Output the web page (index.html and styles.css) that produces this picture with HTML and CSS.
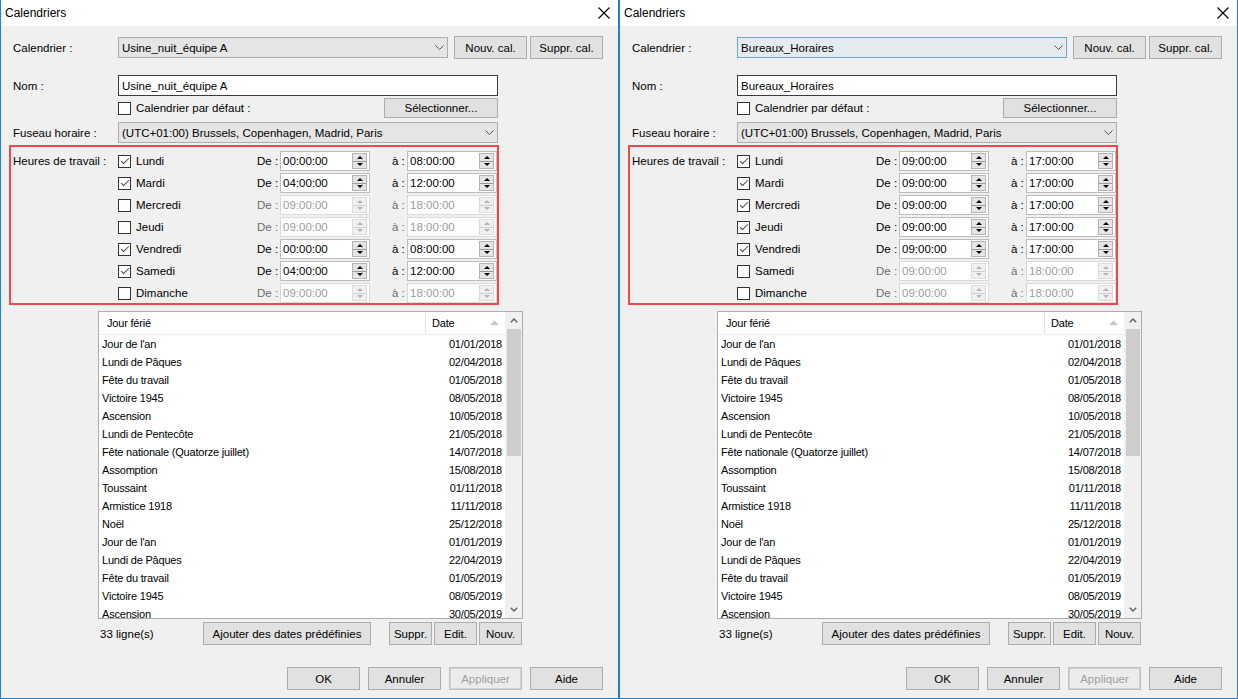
FILE: index.html
```html
<!DOCTYPE html>
<html lang="fr">
<head>
<meta charset="utf-8">
<title>Calendriers</title>
<link rel="stylesheet" href="styles.css">
</head>
<body>
<div class="screen">

<!-- ===== LEFT DIALOG ===== -->
<div class="dialog">
  <div class="titlebar">
    <span>Calendriers</span>
    <svg class="close" width="12" height="12" viewBox="0 0 12 12"><path d="M0.5 0.5 L11.5 11.5 M11.5 0.5 L0.5 11.5" stroke="#000" stroke-width="1.1" fill="none"/></svg>
  </div>
  <div class="content">
    <div class="r1">
      <span class="lbl">Calendrier :</span>
      <div class="combo w330"><span>Usine_nuit_équipe A</span><svg width="9" height="5" viewBox="0 0 9 5"><path d="M0.5 0.5 L4.5 4.5 L8.5 0.5" stroke="#555" fill="none"/></svg></div>
      <div class="btn ml6">Nouv. cal.</div>
      <div class="btn ml3">Suppr. cal.</div>
    </div>
    <div class="r2">
      <span class="lbl">Nom :</span>
      <div class="input">Usine_nuit_équipe A</div>
    </div>
    <div class="r3">
      <span class="lbl"></span>
      <div class="chk"><span class="cb"></span>Calendrier par défaut :</div>
      <div class="btn sel">Sélectionner...</div>
    </div>
    <div class="r4">
      <span class="lbl">Fuseau horaire :</span>
      <div class="combo w380"><span>(UTC+01:00) Brussels, Copenhagen, Madrid, Paris</span><svg width="9" height="5" viewBox="0 0 9 5"><path d="M0.5 0.5 L4.5 4.5 L8.5 0.5" stroke="#555" fill="none"/></svg></div>
    </div>
    <div class="hours">
      <span class="hours-lbl">Heures de travail :</span>
      <div class="days">
        <div class="day"><div class="chk dchk"><span class="cb on"></span>Lundi</div><span class="de">De :</span><div class="field"><span>00:00:00</span><span class="spin"><i class="up"></i><i class="dn"></i></span></div><span class="a">à :</span><div class="field"><span>08:00:00</span><span class="spin"><i class="up"></i><i class="dn"></i></span></div></div>
        <div class="day"><div class="chk dchk"><span class="cb on"></span>Mardi</div><span class="de">De :</span><div class="field"><span>04:00:00</span><span class="spin"><i class="up"></i><i class="dn"></i></span></div><span class="a">à :</span><div class="field"><span>12:00:00</span><span class="spin"><i class="up"></i><i class="dn"></i></span></div></div>
        <div class="day off"><div class="chk dchk"><span class="cb"></span>Mercredi</div><span class="de">De :</span><div class="field"><span>09:00:00</span><span class="spin"><i class="up"></i><i class="dn"></i></span></div><span class="a">à :</span><div class="field"><span>18:00:00</span><span class="spin"><i class="up"></i><i class="dn"></i></span></div></div>
        <div class="day off"><div class="chk dchk"><span class="cb"></span>Jeudi</div><span class="de">De :</span><div class="field"><span>09:00:00</span><span class="spin"><i class="up"></i><i class="dn"></i></span></div><span class="a">à :</span><div class="field"><span>18:00:00</span><span class="spin"><i class="up"></i><i class="dn"></i></span></div></div>
        <div class="day"><div class="chk dchk"><span class="cb on"></span>Vendredi</div><span class="de">De :</span><div class="field"><span>00:00:00</span><span class="spin"><i class="up"></i><i class="dn"></i></span></div><span class="a">à :</span><div class="field"><span>08:00:00</span><span class="spin"><i class="up"></i><i class="dn"></i></span></div></div>
        <div class="day"><div class="chk dchk"><span class="cb on"></span>Samedi</div><span class="de">De :</span><div class="field"><span>04:00:00</span><span class="spin"><i class="up"></i><i class="dn"></i></span></div><span class="a">à :</span><div class="field"><span>12:00:00</span><span class="spin"><i class="up"></i><i class="dn"></i></span></div></div>
        <div class="day off"><div class="chk dchk"><span class="cb"></span>Dimanche</div><span class="de">De :</span><div class="field"><span>09:00:00</span><span class="spin"><i class="up"></i><i class="dn"></i></span></div><span class="a">à :</span><div class="field"><span>18:00:00</span><span class="spin"><i class="up"></i><i class="dn"></i></span></div></div>
      </div>
    </div>
    <div class="tbl">
      <div class="list">
        <div class="hdr"><span class="h1">Jour férié</span><span class="h2">Date<svg class="sort" width="9" height="5" viewBox="0 0 9 5"><path d="M0 5 L4.5 0.5 L9 5 Z" fill="#c8c8c8"/></svg></span></div>
        <div class="row"><span class="c1">Jour de l'an</span><span class="c2">01/01/2018</span></div>
        <div class="row"><span class="c1">Lundi de Pâques</span><span class="c2">02/04/2018</span></div>
        <div class="row"><span class="c1">Fête du travail</span><span class="c2">01/05/2018</span></div>
        <div class="row"><span class="c1">Victoire 1945</span><span class="c2">08/05/2018</span></div>
        <div class="row"><span class="c1">Ascension</span><span class="c2">10/05/2018</span></div>
        <div class="row"><span class="c1">Lundi de Pentecôte</span><span class="c2">21/05/2018</span></div>
        <div class="row"><span class="c1">Fête nationale (Quatorze juillet)</span><span class="c2">14/07/2018</span></div>
        <div class="row"><span class="c1">Assomption</span><span class="c2">15/08/2018</span></div>
        <div class="row"><span class="c1">Toussaint</span><span class="c2">01/11/2018</span></div>
        <div class="row"><span class="c1">Armistice 1918</span><span class="c2">11/11/2018</span></div>
        <div class="row"><span class="c1">Noël</span><span class="c2">25/12/2018</span></div>
        <div class="row"><span class="c1">Jour de l'an</span><span class="c2">01/01/2019</span></div>
        <div class="row"><span class="c1">Lundi de Pâques</span><span class="c2">22/04/2019</span></div>
        <div class="row"><span class="c1">Fête du travail</span><span class="c2">01/05/2019</span></div>
        <div class="row"><span class="c1">Victoire 1945</span><span class="c2">08/05/2019</span></div>
        <div class="row"><span class="c1">Ascension</span><span class="c2">30/05/2019</span></div>
      </div>
      <div class="sb">
        <div class="sb-btn"><svg width="8" height="5" viewBox="0 0 8 5"><path d="M0.8 4.3 L4 1 L7.2 4.3" stroke="#606060" stroke-width="1.4" fill="none"/></svg></div>
        <div class="thumb"></div>
        <div class="sb-btn down"><svg width="8" height="5" viewBox="0 0 8 5"><path d="M0.8 0.7 L4 4 L7.2 0.7" stroke="#606060" stroke-width="1.4" fill="none"/></svg></div>
      </div>
    </div>
    <div class="foot">
      <span class="count">33 ligne(s)</span>
      <div class="btn add">Ajouter des dates prédéfinies</div>
      <div class="btn sm first">Suppr.</div>
      <div class="btn sm">Edit.</div>
      <div class="btn sm">Nouv.</div>
    </div>
    <div class="actions">
      <div class="btn">OK</div>
      <div class="btn">Annuler</div>
      <div class="btn disabled">Appliquer</div>
      <div class="btn">Aide</div>
    </div>
  </div>
</div>

<!-- ===== RIGHT DIALOG ===== -->
<div class="dialog">
  <div class="titlebar">
    <span>Calendriers</span>
    <svg class="close" width="12" height="12" viewBox="0 0 12 12"><path d="M0.5 0.5 L11.5 11.5 M11.5 0.5 L0.5 11.5" stroke="#000" stroke-width="1.1" fill="none"/></svg>
  </div>
  <div class="content">
    <div class="r1">
      <span class="lbl">Calendrier :</span>
      <div class="combo w330 focus"><span>Bureaux_Horaires</span><svg width="9" height="5" viewBox="0 0 9 5"><path d="M0.5 0.5 L4.5 4.5 L8.5 0.5" stroke="#555" fill="none"/></svg></div>
      <div class="btn ml6">Nouv. cal.</div>
      <div class="btn ml3">Suppr. cal.</div>
    </div>
    <div class="r2">
      <span class="lbl">Nom :</span>
      <div class="input">Bureaux_Horaires</div>
    </div>
    <div class="r3">
      <span class="lbl"></span>
      <div class="chk"><span class="cb"></span>Calendrier par défaut :</div>
      <div class="btn sel">Sélectionner...</div>
    </div>
    <div class="r4">
      <span class="lbl">Fuseau horaire :</span>
      <div class="combo w380"><span>(UTC+01:00) Brussels, Copenhagen, Madrid, Paris</span><svg width="9" height="5" viewBox="0 0 9 5"><path d="M0.5 0.5 L4.5 4.5 L8.5 0.5" stroke="#555" fill="none"/></svg></div>
    </div>
    <div class="hours">
      <span class="hours-lbl">Heures de travail :</span>
      <div class="days">
        <div class="day"><div class="chk dchk"><span class="cb on"></span>Lundi</div><span class="de">De :</span><div class="field"><span>09:00:00</span><span class="spin"><i class="up"></i><i class="dn"></i></span></div><span class="a">à :</span><div class="field"><span>17:00:00</span><span class="spin"><i class="up"></i><i class="dn"></i></span></div></div>
        <div class="day"><div class="chk dchk"><span class="cb on"></span>Mardi</div><span class="de">De :</span><div class="field"><span>09:00:00</span><span class="spin"><i class="up"></i><i class="dn"></i></span></div><span class="a">à :</span><div class="field"><span>17:00:00</span><span class="spin"><i class="up"></i><i class="dn"></i></span></div></div>
        <div class="day"><div class="chk dchk"><span class="cb on"></span>Mercredi</div><span class="de">De :</span><div class="field"><span>09:00:00</span><span class="spin"><i class="up"></i><i class="dn"></i></span></div><span class="a">à :</span><div class="field"><span>17:00:00</span><span class="spin"><i class="up"></i><i class="dn"></i></span></div></div>
        <div class="day"><div class="chk dchk"><span class="cb on"></span>Jeudi</div><span class="de">De :</span><div class="field"><span>09:00:00</span><span class="spin"><i class="up"></i><i class="dn"></i></span></div><span class="a">à :</span><div class="field"><span>17:00:00</span><span class="spin"><i class="up"></i><i class="dn"></i></span></div></div>
        <div class="day"><div class="chk dchk"><span class="cb on"></span>Vendredi</div><span class="de">De :</span><div class="field"><span>09:00:00</span><span class="spin"><i class="up"></i><i class="dn"></i></span></div><span class="a">à :</span><div class="field"><span>17:00:00</span><span class="spin"><i class="up"></i><i class="dn"></i></span></div></div>
        <div class="day off"><div class="chk dchk"><span class="cb"></span>Samedi</div><span class="de">De :</span><div class="field"><span>09:00:00</span><span class="spin"><i class="up"></i><i class="dn"></i></span></div><span class="a">à :</span><div class="field"><span>18:00:00</span><span class="spin"><i class="up"></i><i class="dn"></i></span></div></div>
        <div class="day off"><div class="chk dchk"><span class="cb"></span>Dimanche</div><span class="de">De :</span><div class="field"><span>09:00:00</span><span class="spin"><i class="up"></i><i class="dn"></i></span></div><span class="a">à :</span><div class="field"><span>18:00:00</span><span class="spin"><i class="up"></i><i class="dn"></i></span></div></div>
      </div>
    </div>
    <div class="tbl">
      <div class="list">
        <div class="hdr"><span class="h1">Jour férié</span><span class="h2">Date<svg class="sort" width="9" height="5" viewBox="0 0 9 5"><path d="M0 5 L4.5 0.5 L9 5 Z" fill="#c8c8c8"/></svg></span></div>
        <div class="row"><span class="c1">Jour de l'an</span><span class="c2">01/01/2018</span></div>
        <div class="row"><span class="c1">Lundi de Pâques</span><span class="c2">02/04/2018</span></div>
        <div class="row"><span class="c1">Fête du travail</span><span class="c2">01/05/2018</span></div>
        <div class="row"><span class="c1">Victoire 1945</span><span class="c2">08/05/2018</span></div>
        <div class="row"><span class="c1">Ascension</span><span class="c2">10/05/2018</span></div>
        <div class="row"><span class="c1">Lundi de Pentecôte</span><span class="c2">21/05/2018</span></div>
        <div class="row"><span class="c1">Fête nationale (Quatorze juillet)</span><span class="c2">14/07/2018</span></div>
        <div class="row"><span class="c1">Assomption</span><span class="c2">15/08/2018</span></div>
        <div class="row"><span class="c1">Toussaint</span><span class="c2">01/11/2018</span></div>
        <div class="row"><span class="c1">Armistice 1918</span><span class="c2">11/11/2018</span></div>
        <div class="row"><span class="c1">Noël</span><span class="c2">25/12/2018</span></div>
        <div class="row"><span class="c1">Jour de l'an</span><span class="c2">01/01/2019</span></div>
        <div class="row"><span class="c1">Lundi de Pâques</span><span class="c2">22/04/2019</span></div>
        <div class="row"><span class="c1">Fête du travail</span><span class="c2">01/05/2019</span></div>
        <div class="row"><span class="c1">Victoire 1945</span><span class="c2">08/05/2019</span></div>
        <div class="row"><span class="c1">Ascension</span><span class="c2">30/05/2019</span></div>
      </div>
      <div class="sb">
        <div class="sb-btn"><svg width="8" height="5" viewBox="0 0 8 5"><path d="M0.8 4.3 L4 1 L7.2 4.3" stroke="#606060" stroke-width="1.4" fill="none"/></svg></div>
        <div class="thumb"></div>
        <div class="sb-btn down"><svg width="8" height="5" viewBox="0 0 8 5"><path d="M0.8 0.7 L4 4 L7.2 0.7" stroke="#606060" stroke-width="1.4" fill="none"/></svg></div>
      </div>
    </div>
    <div class="foot">
      <span class="count">33 ligne(s)</span>
      <div class="btn add">Ajouter des dates prédéfinies</div>
      <div class="btn sm first">Suppr.</div>
      <div class="btn sm">Edit.</div>
      <div class="btn sm">Nouv.</div>
    </div>
    <div class="actions">
      <div class="btn">OK</div>
      <div class="btn">Annuler</div>
      <div class="btn disabled">Appliquer</div>
      <div class="btn">Aide</div>
    </div>
  </div>
</div>

</div>
</body>
</html>
```

FILE: styles.css
```css
html, body {
  margin: 0;
  padding: 0;
  background: #f0f0f0;
}
body {
  font-family: "Liberation Sans", Arial, sans-serif;
  font-size: 11.5px;
  color: #000;
}
.screen {
  display: flex;
  width: 1238px;
  height: 699px;
  overflow: hidden;
}
.dialog {
  width: 619px;
  height: 699px;
  flex: none;
  box-sizing: border-box;
  border: 1px solid #1883d7;
  border-top: 0;
  background: #f0f0f0;
  display: flex;
  flex-direction: column;
}
.titlebar {
  height: 26px;
  flex: none;
  background: #fff;
  display: flex;
  align-items: center;
  justify-content: space-between;
  padding: 0 8px 0 4px;
  font-size: 12px;
}
.close { display: block; }
.content {
  display: flex;
  flex-direction: column;
  padding-left: 8px;
}
.lbl {
  width: 105px;
  flex: none;
}
.r1, .r2, .r3, .r4 {
  display: flex;
  align-items: center;
  padding-left: 4px;
}
.r1 { margin-top: 10px; height: 23px; }
.r2 { margin-top: 16px; height: 21px; }
.r3 { margin-top: 2px; height: 20px; width: 485px; }
.r4 { margin-top: 4px; height: 21px; }

.combo {
  height: 21px;
  box-sizing: border-box;
  border: 1px solid #adadad;
  background: #e5e5e5;
  display: flex;
  align-items: center;
  justify-content: space-between;
  padding: 0 3px 0 3px;
}
.combo.focus {
  border-color: #6aa7dc;
  background: #e6ebf0;
}
.w330 { width: 330px; }
.w380 { width: 380px; }
.input {
  width: 380px;
  height: 21px;
  box-sizing: border-box;
  border: 1px solid #3c3c3c;
  background: #fff;
  padding-left: 3px;
  display: flex;
  align-items: center;
}
.btn {
  width: 73px;
  height: 23px;
  flex: none;
  box-sizing: border-box;
  border: 1px solid #adadad;
  background: #e1e1e1;
  display: flex;
  align-items: center;
  justify-content: center;
  white-space: nowrap;
}
.ml6 { margin-left: 6px; }
.ml3 { margin-left: 3px; }
.sel {
  width: 114px;
  height: 20px;
  margin-left: auto;
}
.chk {
  display: flex;
  align-items: center;
  gap: 5px;
}
.cb {
  width: 13px;
  height: 13px;
  box-sizing: border-box;
  border: 1px solid #333;
  background: #fff;
  display: flex;
  align-items: center;
  justify-content: center;
  flex: none;
}
.cb.on::after {
  content: "";
  width: 3px;
  height: 7px;
  border: solid #444;
  border-width: 0 1px 1px 0;
  transform: translate(0, -1px) rotate(45deg);
}

/* working hours box */
.hours {
  margin-top: 2px;
  width: 490px;
  height: 160px;
  box-sizing: border-box;
  border: 2px solid #f24848;
  padding: 3px 0 0 2px;
  display: flex;
  overflow: visible;
}
.hours-lbl {
  width: 105px;
  flex: none;
  line-height: 22px;
}
.days {
  display: flex;
  flex-direction: column;
}
.day {
  height: 22px;
  flex: none;
  display: flex;
  align-items: center;
}
.dchk { width: 139px; flex: none; }
.de { width: 23px; flex: none; }
.a { width: 15px; flex: none; margin-left: 22px; }
.field {
  width: 90px;
  height: 20px;
  flex: none;
  box-sizing: border-box;
  border: 1px solid #bdbdbd;
  background: #fff;
  display: flex;
  align-items: center;
  justify-content: space-between;
  padding: 0 2px 0 2px;
}
.spin {
  width: 15px;
  height: 16px;
  box-sizing: border-box;
  border: 1px solid #b4b4b4;
  background: #e5e5e5;
  display: flex;
  flex-direction: column;
}
.spin i {
  flex: 1;
  display: flex;
  align-items: center;
  justify-content: center;
}
.spin i.up { border-bottom: 1px solid #9a9a9a; }
.spin i.up::before {
  content: "";
  border-left: 3px solid transparent;
  border-right: 3px solid transparent;
  border-bottom: 3px solid #000;
}
.spin i.dn::before {
  content: "";
  border-left: 3px solid transparent;
  border-right: 3px solid transparent;
  border-top: 3px solid #000;
}
.day.off .de, .day.off .a { color: #6d6d6d; }
.day.off .field {
  border-color: #dadada;
  color: #9c9c9c;
}
.day.off .spin {
  border-color: #dcdcdc;
  background: #f0f0f0;
}
.day.off .spin i.up { border-bottom-color: #d0d0d0; }
.day.off .spin i.up::before { border-bottom-color: #b5b5b5; }
.day.off .spin i.dn::before { border-top-color: #b5b5b5; }

/* holiday table */
.tbl {
  margin-top: 6px;
  margin-left: 89px;
  width: 425px;
  height: 308px;
  box-sizing: border-box;
  border: 1px solid #adadad;
  background: #fff;
  display: flex;
  font-size: 11px;
  letter-spacing: -0.2px;
}
.list {
  width: 406px;
  flex: none;
  overflow: hidden;
  display: flex;
  flex-direction: column;
}
.hdr {
  height: 23px;
  flex: none;
  box-sizing: border-box;
  border-bottom: 1px solid #ececec;
  display: flex;
  align-items: stretch;
}
.h1 {
  width: 327px;
  box-sizing: border-box;
  border-right: 1px solid #e5e5e5;
  padding-left: 8px;
  display: flex;
  align-items: center;
}
.h2 {
  width: 79px;
  box-sizing: border-box;
  padding: 0 6px 0 6px;
  display: flex;
  align-items: center;
  justify-content: space-between;
}
.sort { display: block; margin-top: -1px; }
.row {
  height: 18px;
  flex: none;
  display: flex;
  align-items: center;
}
.c1 {
  width: 327px;
  box-sizing: border-box;
  padding-left: 3px;
  white-space: nowrap;
}
.c2 {
  width: 79px;
  box-sizing: border-box;
  padding-right: 3px;
  text-align: right;
}
.sb {
  width: 17px;
  flex: none;
  background: #f0f0f0;
  display: flex;
  flex-direction: column;
}
.sb-btn {
  height: 17px;
  flex: none;
  display: flex;
  align-items: center;
  justify-content: center;
}
.sb-btn svg { display: block; }
.sb-btn.down { margin-top: auto; }
.thumb {
  height: 127px;
  margin: 0 1px 0 2px;
  background: #cdcdcd;
}
.foot {
  margin-top: 3px;
  margin-left: 89px;
  width: 425px;
  height: 23px;
  display: flex;
  align-items: center;
}
.count {
  width: 105px;
  flex: none;
  box-sizing: border-box;
  padding-left: 2px;
}
.btn.add { width: 168px; }
.btn.sm { width: 43px; margin-left: 2px; }
.btn.sm.first { margin-left: 18px; }
.actions {
  margin-top: 22px;
  height: 23px;
  display: flex;
  justify-content: flex-end;
  gap: 8px;
  padding-right: 15px;
}
.btn.disabled {
  border: 1px solid #bfbfbf;
  box-shadow: inset 0 0 0 1px #d2d2d2;
  background: #ececec;
  color: #a0a0a0;
}
```
